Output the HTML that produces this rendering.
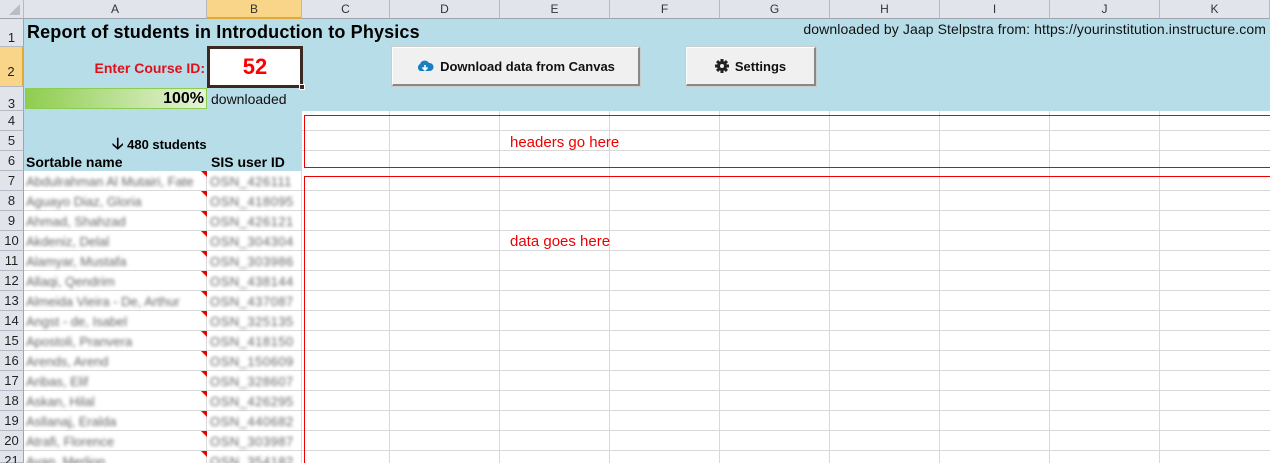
<!DOCTYPE html>
<html><head><meta charset="utf-8"><style>
*{margin:0;padding:0;box-sizing:border-box}
html{width:1270px;height:463px;overflow:hidden}
body{width:1270px;height:463px;overflow:hidden;background:#fff;position:relative;font-family:"Liberation Sans",sans-serif;}
.a{position:absolute}
.ch{position:absolute;top:0;height:19px;background:#e1e5eb;border-right:1px solid #b5bac2;border-bottom:1px solid #9ea4ad;font-size:12px;color:#333;text-align:center;line-height:18px}
.rh{position:absolute;left:0;width:24px;background:#e1e5eb;border-right:1px solid #9ea4ad;border-bottom:1px solid #b5bac2;font-size:13px;color:#222;text-align:center}
.vl{position:absolute;width:1px;background:#d9d9d9}
.hl{position:absolute;height:1px;background:#d9d9d9}
.blur{filter:blur(1.5px);color:#666;font-size:13px}
.tri{position:absolute;width:0;height:0;border-top:6px solid #e00;border-left:6px solid transparent}
.btn{position:absolute;background:#f0f0f0;border:1px solid #fff;border-right:2px solid #888;border-bottom:2px solid #888;box-shadow:0 0 0 1px #ccc;font-size:13px;font-weight:bold;color:#111;display:flex;align-items:center;justify-content:center;gap:6px}
</style></head><body>
<div class="vl" style="left:206px;top:171px;height:292px"></div>
<div class="vl" style="left:301px;top:111px;height:352px"></div>
<div class="vl" style="left:389px;top:111px;height:352px"></div>
<div class="vl" style="left:499px;top:111px;height:352px"></div>
<div class="vl" style="left:609px;top:111px;height:352px"></div>
<div class="vl" style="left:719px;top:111px;height:352px"></div>
<div class="vl" style="left:829px;top:111px;height:352px"></div>
<div class="vl" style="left:939px;top:111px;height:352px"></div>
<div class="vl" style="left:1049px;top:111px;height:352px"></div>
<div class="vl" style="left:1159px;top:111px;height:352px"></div>
<div id="hls"></div>
<div class="a" style="left:24px;top:19px;width:1246px;height:92px;background:#b7dde8"></div>
<div class="a" style="left:24px;top:111px;width:278px;height:60px;background:#b7dde8"></div>
<div class="ch" style="left:0;width:24px;"><div class="a" style="right:3px;bottom:3px;border-bottom:11px solid #b9bec6;border-left:11px solid transparent"></div></div>
<div class="ch" style="left:24px;width:183px">A</div>
<div class="ch" style="left:207px;width:95px;background:#f9d58a;border-bottom:2px solid #e2a938">B</div>
<div class="ch" style="left:302px;width:88px">C</div>
<div class="ch" style="left:390px;width:110px">D</div>
<div class="ch" style="left:500px;width:110px">E</div>
<div class="ch" style="left:610px;width:110px">F</div>
<div class="ch" style="left:720px;width:110px">G</div>
<div class="ch" style="left:830px;width:110px">H</div>
<div class="ch" style="left:940px;width:110px">I</div>
<div class="ch" style="left:1050px;width:110px">J</div>
<div class="ch" style="left:1160px;width:110px">K</div>
<div id="rows"></div>
<div class="a" style="left:27px;top:22px;font-size:18px;font-weight:bold;color:#000;letter-spacing:0.15px">Report of students in Introduction to Physics</div>
<div class="a" style="right:4px;top:21px;font-size:14px;color:#111;letter-spacing:0.1px">downloaded by Jaap Stelpstra from: https://yourinstitution.instructure.com</div>
<div class="a" style="right:1065px;top:60px;font-size:14px;font-weight:bold;color:#e0101a">Enter Course ID:</div>
<div class="a" style="left:207px;top:46px;width:96px;height:42px;background:#fff;border:3px solid #3b2a22;text-align:center;font-size:22px;font-weight:bold;color:#f00;line-height:36px">52</div>
<div class="a" style="left:299px;top:84px;width:6px;height:6px;background:#3b2a22;border:1px solid #fff"></div>
<div class="btn" style="left:392px;top:47px;width:248px;height:39px">
<svg width="18" height="14" viewBox="0 0 18 14"><path d="M4 12 A4 4 0 0 1 4 5 A5 5 0 0 1 13 4 A4 4 0 0 1 14 12 Z" fill="#1b7fc4"/><path d="M9 6 V11 M6.5 8.5 L9 11 L11.5 8.5" stroke="#fff" stroke-width="1.6" fill="none"/></svg>Download data from Canvas</div>
<div class="btn" style="left:686px;top:47px;width:130px;height:39px">
<svg width="14" height="14" viewBox="0 0 14 14"><g fill="#222"><circle cx="7" cy="7" r="5"/><rect x="5.5" y="0" width="3" height="14"/><rect x="0" y="5.5" width="14" height="3"/><rect x="5.5" y="0" width="3" height="14" transform="rotate(45 7 7)"/><rect x="5.5" y="0" width="3" height="14" transform="rotate(-45 7 7)"/></g><circle cx="7" cy="7" r="2" fill="#f0f0f0"/></svg>Settings</div>
<div class="a" style="left:25px;top:88px;width:182px;height:21px;border:1px solid #8ccf4f;background:linear-gradient(90deg,#8fcd4f,#e6f3d8);text-align:right;font-size:16px;font-weight:bold;padding-right:2px;line-height:20px">100%</div>
<div class="a" style="left:211px;top:91px;font-size:14px;color:#111">downloaded</div>
<div class="a" style="left:112px;top:133px;font-size:13px;font-weight:bold"><span style="font-size:16px">&#129123;</span> 480 students</div>
<div class="a" style="left:26px;top:154px;font-size:14px;font-weight:bold">Sortable name</div>
<div class="a" style="left:211px;top:154px;font-size:14px;font-weight:bold">SIS user ID</div>
<div class="a" style="left:304px;top:115px;width:970px;height:53px;border:1px solid #e00"></div>
<div class="a" style="left:304px;top:176px;width:970px;height:300px;border:1px solid #e00"></div>
<div class="a" style="left:510px;top:134px;font-size:15px;color:#e00">headers go here</div>
<div class="a" style="left:510px;top:233px;font-size:15px;color:#e00">data goes here</div>
<div id="names"></div>
<script>
var h='';var tops=[19,47,87,111,131,151,171];for(var i=8;i<=22;i++)tops.push(171+(i-7)*20);
for(var i=0;i<21;i++){var t=tops[i],b=Math.min(tops[i+1],463);var sel=i==1;h+='<div class="rh" style="top:'+t+'px;height:'+(b-t)+'px;line-height:'+(tops[i+1]-t+(i<3?10:0))+'px;'+(sel?'background:#f9d58a;border-right:2px solid #e2a938;':'')+'">'+(i+1)+'</div>';}
document.getElementById('rows').innerHTML=h;
var g='';for(var y=130;y<463;y+=20){if(y>=171||y==130||y==150)g+='<div class="hl" style="left:'+(y>=171?24:302)+'px;top:'+y+'px;width:1246px"></div>';}
document.getElementById('hls').innerHTML=g;
var n=["Abdulrahman Al Mutairi, Fate","Aguayo Diaz, Gloria","Ahmad, Shahzad","Akdeniz, Delal","Alamyar, Mustafa","Allaqi, Qendrim","Almeida Vieira - De, Arthur","Angst - de, Isabel","Apostoli, Pranvera","Arends, Arend","Aribas, Elif","Askan, Hilal","Asllanaj, Eralda","Atrafi, Florence","Ayan, Merlion"];
var s=["OSN_426111","OSN_418095","OSN_426121","OSN_304304","OSN_303986","OSN_438144","OSN_437087","OSN_325135","OSN_418150","OSN_150609","OSN_328607","OSN_426295","OSN_440682","OSN_303987","OSN_354182"];
var k='';for(var i=0;i<15;i++){var t=171+i*20;k+='<div class="a blur" style="left:26px;top:'+(t+3)+'px;width:180px;overflow:hidden;white-space:nowrap">'+n[i]+'</div><div class="a blur" style="left:210px;top:'+(t+3)+'px;letter-spacing:0.5px">'+s[i]+'</div><div class="tri" style="left:201px;top:'+t+'px"></div>';}
document.getElementById('names').innerHTML=k;
</script>
</body></html>
